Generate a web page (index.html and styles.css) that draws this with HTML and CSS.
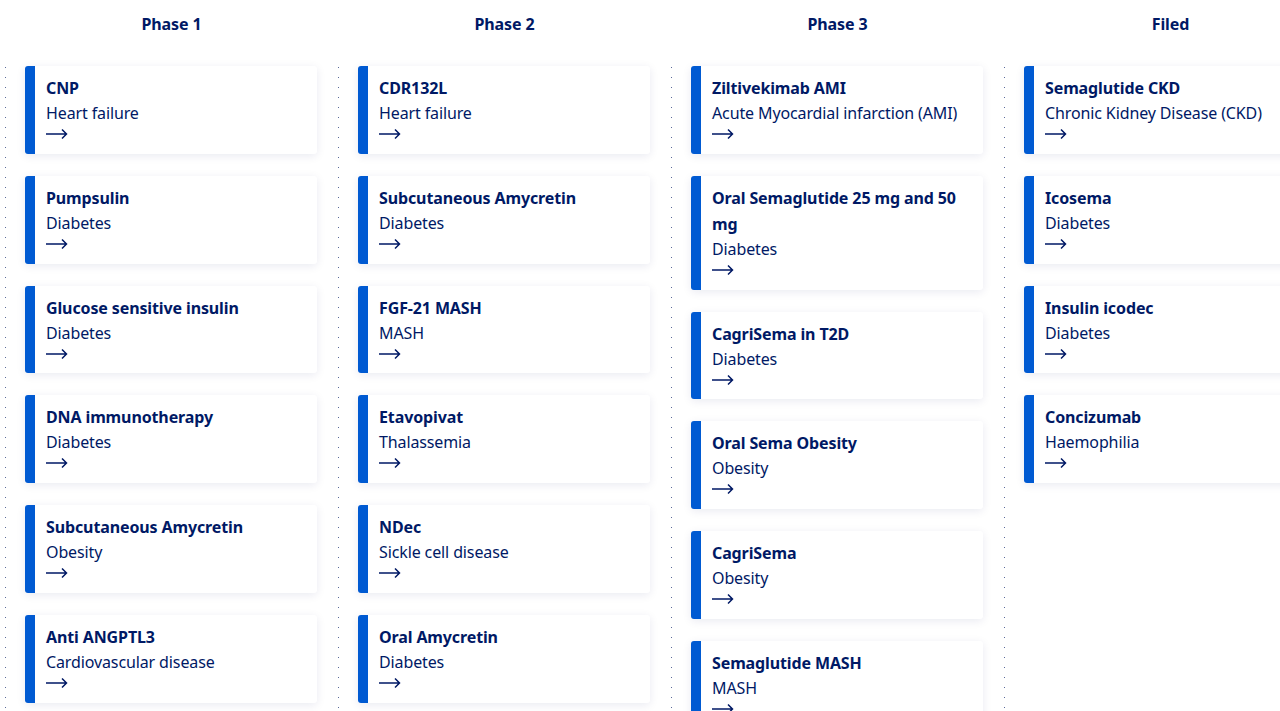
FILE: index.html
```html
<!DOCTYPE html>
<html lang="en">
<head>
<meta charset="utf-8">
<title>Pipeline</title>
<link rel="stylesheet" href="styles.css">
</head>
<body>
<div class="board">
  <section class="col">
    <h2 class="col-title">Phase 1</h2>
    <div class="list">
      <a class="card"><span class="name">CNP</span><span class="area">Heart failure</span><span class="arrow"><svg width="22" height="12" viewBox="0 0 22 12"><path d="M0 6H20.5M16 1.5L20.5 6L16 10.5" fill="none" stroke="#001965" stroke-width="1.5"/></svg></span></a>
      <a class="card"><span class="name">Pumpsulin</span><span class="area">Diabetes</span><span class="arrow"><svg width="22" height="12" viewBox="0 0 22 12"><path d="M0 6H20.5M16 1.5L20.5 6L16 10.5" fill="none" stroke="#001965" stroke-width="1.5"/></svg></span></a>
      <a class="card"><span class="name">Glucose sensitive insulin</span><span class="area">Diabetes</span><span class="arrow"><svg width="22" height="12" viewBox="0 0 22 12"><path d="M0 6H20.5M16 1.5L20.5 6L16 10.5" fill="none" stroke="#001965" stroke-width="1.5"/></svg></span></a>
      <a class="card"><span class="name">DNA immunotherapy</span><span class="area">Diabetes</span><span class="arrow"><svg width="22" height="12" viewBox="0 0 22 12"><path d="M0 6H20.5M16 1.5L20.5 6L16 10.5" fill="none" stroke="#001965" stroke-width="1.5"/></svg></span></a>
      <a class="card"><span class="name">Subcutaneous Amycretin</span><span class="area">Obesity</span><span class="arrow"><svg width="22" height="12" viewBox="0 0 22 12"><path d="M0 6H20.5M16 1.5L20.5 6L16 10.5" fill="none" stroke="#001965" stroke-width="1.5"/></svg></span></a>
      <a class="card"><span class="name">Anti ANGPTL3</span><span class="area">Cardiovascular disease</span><span class="arrow"><svg width="22" height="12" viewBox="0 0 22 12"><path d="M0 6H20.5M16 1.5L20.5 6L16 10.5" fill="none" stroke="#001965" stroke-width="1.5"/></svg></span></a>
    </div>
  </section>
  <section class="col">
    <h2 class="col-title">Phase 2</h2>
    <div class="list">
      <a class="card"><span class="name">CDR132L</span><span class="area">Heart failure</span><span class="arrow"><svg width="22" height="12" viewBox="0 0 22 12"><path d="M0 6H20.5M16 1.5L20.5 6L16 10.5" fill="none" stroke="#001965" stroke-width="1.5"/></svg></span></a>
      <a class="card"><span class="name">Subcutaneous Amycretin</span><span class="area">Diabetes</span><span class="arrow"><svg width="22" height="12" viewBox="0 0 22 12"><path d="M0 6H20.5M16 1.5L20.5 6L16 10.5" fill="none" stroke="#001965" stroke-width="1.5"/></svg></span></a>
      <a class="card"><span class="name">FGF-21 MASH</span><span class="area">MASH</span><span class="arrow"><svg width="22" height="12" viewBox="0 0 22 12"><path d="M0 6H20.5M16 1.5L20.5 6L16 10.5" fill="none" stroke="#001965" stroke-width="1.5"/></svg></span></a>
      <a class="card"><span class="name">Etavopivat</span><span class="area">Thalassemia</span><span class="arrow"><svg width="22" height="12" viewBox="0 0 22 12"><path d="M0 6H20.5M16 1.5L20.5 6L16 10.5" fill="none" stroke="#001965" stroke-width="1.5"/></svg></span></a>
      <a class="card"><span class="name">NDec</span><span class="area">Sickle cell disease</span><span class="arrow"><svg width="22" height="12" viewBox="0 0 22 12"><path d="M0 6H20.5M16 1.5L20.5 6L16 10.5" fill="none" stroke="#001965" stroke-width="1.5"/></svg></span></a>
      <a class="card"><span class="name">Oral Amycretin</span><span class="area">Diabetes</span><span class="arrow"><svg width="22" height="12" viewBox="0 0 22 12"><path d="M0 6H20.5M16 1.5L20.5 6L16 10.5" fill="none" stroke="#001965" stroke-width="1.5"/></svg></span></a>
    </div>
  </section>
  <section class="col">
    <h2 class="col-title">Phase 3</h2>
    <div class="list">
      <a class="card"><span class="name">Ziltivekimab AMI</span><span class="area">Acute Myocardial infarction (AMI)</span><span class="arrow"><svg width="22" height="12" viewBox="0 0 22 12"><path d="M0 6H20.5M16 1.5L20.5 6L16 10.5" fill="none" stroke="#001965" stroke-width="1.5"/></svg></span></a>
      <a class="card"><span class="name">Oral Semaglutide 25 mg and 50 mg</span><span class="area">Diabetes</span><span class="arrow"><svg width="22" height="12" viewBox="0 0 22 12"><path d="M0 6H20.5M16 1.5L20.5 6L16 10.5" fill="none" stroke="#001965" stroke-width="1.5"/></svg></span></a>
      <a class="card"><span class="name">CagriSema in T2D</span><span class="area">Diabetes</span><span class="arrow"><svg width="22" height="12" viewBox="0 0 22 12"><path d="M0 6H20.5M16 1.5L20.5 6L16 10.5" fill="none" stroke="#001965" stroke-width="1.5"/></svg></span></a>
      <a class="card"><span class="name">Oral Sema Obesity</span><span class="area">Obesity</span><span class="arrow"><svg width="22" height="12" viewBox="0 0 22 12"><path d="M0 6H20.5M16 1.5L20.5 6L16 10.5" fill="none" stroke="#001965" stroke-width="1.5"/></svg></span></a>
      <a class="card"><span class="name">CagriSema</span><span class="area">Obesity</span><span class="arrow"><svg width="22" height="12" viewBox="0 0 22 12"><path d="M0 6H20.5M16 1.5L20.5 6L16 10.5" fill="none" stroke="#001965" stroke-width="1.5"/></svg></span></a>
      <a class="card"><span class="name">Semaglutide MASH</span><span class="area">MASH</span><span class="arrow"><svg width="22" height="12" viewBox="0 0 22 12"><path d="M0 6H20.5M16 1.5L20.5 6L16 10.5" fill="none" stroke="#001965" stroke-width="1.5"/></svg></span></a>
    </div>
  </section>
  <section class="col">
    <h2 class="col-title">Filed</h2>
    <div class="list">
      <a class="card"><span class="name">Semaglutide CKD</span><span class="area">Chronic Kidney Disease (CKD)</span><span class="arrow"><svg width="22" height="12" viewBox="0 0 22 12"><path d="M0 6H20.5M16 1.5L20.5 6L16 10.5" fill="none" stroke="#001965" stroke-width="1.5"/></svg></span></a>
      <a class="card"><span class="name">Icosema</span><span class="area">Diabetes</span><span class="arrow"><svg width="22" height="12" viewBox="0 0 22 12"><path d="M0 6H20.5M16 1.5L20.5 6L16 10.5" fill="none" stroke="#001965" stroke-width="1.5"/></svg></span></a>
      <a class="card"><span class="name">Insulin icodec</span><span class="area">Diabetes</span><span class="arrow"><svg width="22" height="12" viewBox="0 0 22 12"><path d="M0 6H20.5M16 1.5L20.5 6L16 10.5" fill="none" stroke="#001965" stroke-width="1.5"/></svg></span></a>
      <a class="card"><span class="name">Concizumab</span><span class="area">Haemophilia</span><span class="arrow"><svg width="22" height="12" viewBox="0 0 22 12"><path d="M0 6H20.5M16 1.5L20.5 6L16 10.5" fill="none" stroke="#001965" stroke-width="1.5"/></svg></span></a>
    </div>
  </section>
</div>
</body>
</html>
```

FILE: styles.css
```css
html, body {
  margin: 0;
  padding: 0;
  background: #ffffff;
  overflow: hidden;
}

body {
  font-family: "Noto Sans", "Open Sans", sans-serif;
  color: #001965;
  font-size: 16px;
  letter-spacing: -0.12px;
}

.board {
  display: grid;
  grid-template-columns: repeat(4, 333px);
  padding-left: 5px;
  width: 1332px;
}

.col {
  display: flex;
  flex-direction: column;
}

.col-title {
  margin: 0;
  height: 66px;
  padding-top: 11px;
  box-sizing: border-box;
  font-size: 16px;
  line-height: 26px;
  font-weight: 700;
  text-align: center;
}

.list {
  display: flex;
  flex-direction: column;
  gap: 22px;
  padding: 0 21px 0 20px;
  background-image: linear-gradient(to bottom, #5a6a9a 1px, transparent 1px);
  background-size: 1px 10px;
  background-repeat: repeat-y;
  background-position: 0 1px;
  min-height: 700px;
}

.card {
  display: flex;
  flex-direction: column;
  background: #ffffff;
  border-left: 10px solid #005ad2;
  border-radius: 3px;
  padding: 9px 12px 9.8px 11px;
  box-shadow: 0 2px 10px rgba(0, 25, 101, 0.09);
  color: #001965;
  text-decoration: none;
}

.name {
  font-weight: 700;
  line-height: 26px;
}

.area {
  line-height: 25px;
}

.arrow {
  display: block;
  height: 18px;
}

.arrow svg {
  display: block;
  margin-top: 2px;
}
```
